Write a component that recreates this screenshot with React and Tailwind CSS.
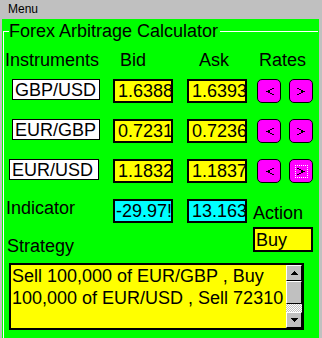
import React from "react";

function Row({ pair, bid, ask, first, shift, focus }) {
  return (
    <div className={`${first ? "mt-[9px]" : "mt-[16px]"} flex items-start h-[24px]`}>
      <div
        className={`${shift ? "ml-[5px] w-[90px]" : "ml-[8px] w-[88px]"} h-[21px] border border-black bg-white pl-[2px] pt-[1px] leading-[19px] overflow-hidden whitespace-nowrap`}
      >
        {pair}
      </div>
      <div className={`${shift ? "ml-[14px]" : "ml-[13px]"} w-[60px] h-[24px] border-2 border-black bg-[#ffff00] pl-[3px] leading-[20px] overflow-hidden whitespace-nowrap`}>
        {bid}
      </div>
      <div className="ml-[14px] w-[60px] h-[24px] border-2 border-black bg-[#ffff00] pl-[3px] leading-[20px] overflow-hidden whitespace-nowrap">
        {ask}
      </div>
      <div className="flex ml-[10px] gap-[8px]">
        <div className="w-[24px] h-[24px] bg-[#ff00ff] border border-black rounded-[5px] flex items-center justify-center">
          <svg width="9" height="9" viewBox="0 0 9 9" shapeRendering="crispEdges">
            <path d="M7 1h2v1h-2zM5 2h2v1h-2zM3 3h2v1h-2zM1 4h4v1h-4zM3 5h2v1h-2zM5 6h2v1h-2zM7 7h2v1h-2z" fill="#000" />
          </svg>
        </div>
        <div className="w-[24px] h-[24px] bg-[#ff00ff] border border-black rounded-[5px] flex items-center justify-center">
          <div className={focus ? "outline outline-1 outline-dotted outline-white p-[1px]" : "p-[1px]"}>
            <svg width="9" height="9" viewBox="0 0 9 9" shapeRendering="crispEdges">
              <path d="M0 1h2v1h-2zM2 2h2v1h-2zM4 3h2v1h-2zM4 4h4v1h-4zM4 5h2v1h-2zM2 6h2v1h-2zM0 7h2v1h-2z" fill="#000" />
            </svg>
          </div>
        </div>
      </div>
    </div>
  );
}

function ScrollBtn({ up }) {
  return (
    <div className="h-[16px] bg-[#c0c0c0] border-t border-l border-white border-r border-b border-r-black border-b-black flex items-center justify-center">
      <svg width="7" height="4" viewBox="0 0 7 4" shapeRendering="crispEdges">
        {up ? (
          <path d="M3 0h1v1h-1zM2 1h3v1h-3zM1 2h5v1h-5zM0 3h7v1h-7z" fill="#000" />
        ) : (
          <path d="M0 0h7v1h-7zM1 1h5v1h-5zM2 2h3v1h-3zM3 3h1v1h-1z" fill="#000" />
        )}
      </svg>
    </div>
  );
}

export default function App() {
  return (
    <div className="w-[322px] h-[338px] bg-[#c0c0c0] flex flex-col overflow-hidden font-['Liberation_Sans',Arial,sans-serif] text-black">
      <div className="h-[19px] pl-[8px] text-[12px] leading-[18px]">Menu</div>
      <div className="flex-1 ml-[2px] mr-[3px] bg-[#00ff00] flex flex-col min-h-0">
        <fieldset className="mt-[1px] mx-[1px] flex-1 border-l border-t border-white min-w-0">
          <legend className="ml-[5px] pr-[2px] text-[18px] leading-[22px]">Forex Arbitrage Calculator</legend>
          <div className="flex flex-col text-[18px]">
            <div className="mt-[8px] flex leading-[20px] whitespace-nowrap">
              <span className="ml-[1px] w-[115px]">Instruments</span>
              <span className="w-[79px]">Bid</span>
              <span className="w-[60px]">Ask</span>
              <span>Rates</span>
            </div>
            <Row pair="GBP/USD" bid="1.6388" ask="1.6393" first />
            <Row pair="EUR/GBP" bid="0.7231" ask="0.7236" />
            <Row pair="EUR/USD" bid="1.1832" ask="1.1837" shift focus />
            <div className="mt-[16px] flex items-start h-[24px] whitespace-nowrap">
              <span className="ml-[2px] w-[107px] leading-[18px]">Indicator</span>
              <div className="w-[60px] h-[24px] border-2 border-black bg-[#00ffff] pl-[1px] leading-[20px] overflow-hidden">-29.97!</div>
              <div className="ml-[14px] w-[60px] h-[24px] border-2 border-black bg-[#00ffff] pl-[3px] leading-[20px] overflow-hidden">13.163</div>
              <span className="ml-[6px] mt-[4px] leading-[20px]">Action</span>
            </div>
            <div className="mt-[4px] flex items-start whitespace-nowrap">
              <span className="ml-[3px] w-[246px] mt-[9px] leading-[20px]">Strategy</span>
              <div className="w-[60px] h-[25px] border-2 border-black bg-[#ffff00] pl-[1px] pt-[1px] leading-[20px]">Buy</div>
            </div>
            <div className="mt-[7px] ml-[5px] w-[295px] h-[67px] border-2 border-black bg-[#ffff00] flex">
              <div className="flex-1 pl-[1px] leading-[22px] overflow-hidden">
                <div className="whitespace-nowrap">Sell 100,000 of EUR/GBP , Buy</div>
                <div className="whitespace-nowrap">100,000 of EUR/USD , Sell 72310</div>
              </div>
              <div className="w-[16px] flex flex-col">
                <ScrollBtn up />
                <div className="h-[23px] bg-[#c0c0c0] border-t border-l border-white border-r border-b border-r-black border-b-black" />
                <div className="flex-1 bg-[repeating-conic-gradient(#c0c0c0_0%_25%,#ffffff_0%_50%)] bg-[length:2px_2px]" />
                <ScrollBtn />
              </div>
            </div>
          </div>
        </fieldset>
      </div>
    </div>
  );
}
